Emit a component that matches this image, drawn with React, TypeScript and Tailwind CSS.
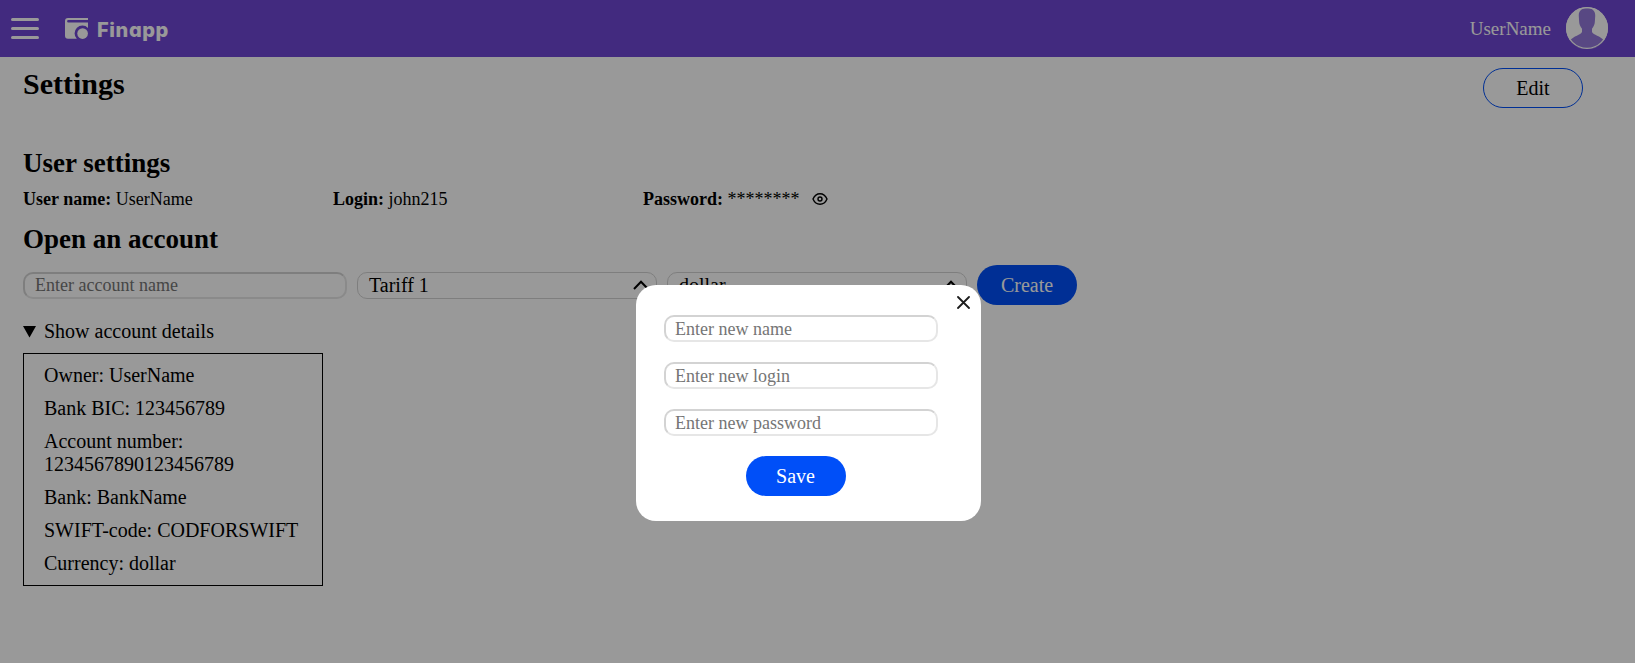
import React from "react";

const details = [
  "Owner: UserName",
  "Bank BIC: 123456789",
  "Account number: 1234567890123456789",
  "Bank: BankName",
  "SWIFT-code: CODFORSWIFT",
  "Currency: dollar",
];

const fieldClass =
  "block h-[27px] rounded-[10px] border-2 border-t-[#d3d3d3] border-l-[#d3d3d3] border-r-[#e6e6e6] border-b-[#e6e6e6] bg-white pt-px pr-[10px] pb-0 text-[18px] leading-[20px] text-black placeholder:text-[#757575] outline-none";

function SelectBox({ value }: { value: string }) {
  return (
    <div className="flex h-[27px] w-[300px] items-center justify-between rounded-[10px] border border-[#d3d3d3] pr-[7px] pl-[11px] text-[20px] leading-[23px]">
      <span>{value}</span>
      <svg width="16" height="10" viewBox="0 0 16 10" fill="none" stroke="#000" strokeWidth="2">
        <path d="M1 9 8 1.8 15 9" />
      </svg>
    </div>
  );
}

function Header() {
  return (
    <header className="flex h-[57px] items-center bg-[#6f47d4] pr-[27px] pl-[11px] text-white">
      <div className="flex w-[28px] flex-col gap-[6px]">
        <span className="h-[3px] rounded-full bg-white" />
        <span className="h-[3px] rounded-full bg-white" />
        <span className="h-[3px] rounded-full bg-white" />
      </div>
      <svg className="ml-[26px]" width="24" height="22" viewBox="0 0 24 22">
        <path
          fill="#fff"
          d="M3 0H23V2H3.400a.7.7 0 0 0 0 2.600H23V9.900A6.800 6.800 0 0 0 11.800 20.800H3A3 3 0 0 1 0 17.800V3A3 3 0 0 1 3 0Z"
        />
        <circle cx="17.6" cy="15.6" r="5.3" fill="#fff" />
      </svg>
      <span className="ml-[8px] pt-[2px] font-['Inter',sans-serif] text-[20px] leading-[26px] font-extrabold tracking-[0.6px] [font-feature-settings:'cv11']">
        Finapp
      </span>
      <span className="ml-auto text-[19px] leading-[22px]">UserName</span>
      <svg className="-mt-px ml-[15px]" width="42" height="42" viewBox="0 0 42 42">
        <circle cx="21" cy="21" r="21" fill="#fff" />
        <path
          fill="#9379da"
          d="M21 1.200c6 0 8.500 3 8.200 8l-.3 4.800c0 3-1.200 5.600-2.900 7.800v3.200c1.200 3 8.500 4 12 8.500A20.500 20.500 0 0 1 4 33.500c3.500-4.500 10.800-5.500 12-8.500v-3.200c-1.700-2.200-2.900-4.800-2.900-7.800l-.3-4.800C12.500 4.200 15 1.200 21 1.200Z"
        />
        <circle cx="21" cy="21" r="20.400" fill="none" stroke="#fff" strokeWidth="1.2" />
      </svg>
    </header>
  );
}

function EditDialog() {
  return (
    <div className="fixed inset-0 flex items-start bg-black/40 pt-[285px] pl-[636px]">
      <div className="relative flex h-[236px] w-[345px] flex-col gap-[20px] rounded-[20px] bg-white pt-[30px] pl-[28px]">
        <input className={`w-[274px] pl-[9px] ${fieldClass}`} placeholder="Enter new name" />
        <input className={`w-[274px] pl-[9px] ${fieldClass}`} placeholder="Enter new login" />
        <input className={`w-[274px] pl-[9px] ${fieldClass}`} placeholder="Enter new password" />
        <button className="ml-[82px] h-[40px] w-[100px] rounded-full bg-[#004ff8] pr-px text-[20px] text-white">
          Save
        </button>
        <button aria-label="Close" className="absolute top-[11px] right-[11px]">
          <svg width="13" height="13" viewBox="0 0 13 13" stroke="#1c1c1c" strokeWidth="1.8" strokeLinecap="round">
            <path d="M1 1 12 12M12 1 1 12" />
          </svg>
        </button>
      </div>
    </div>
  );
}

export default function App() {
  return (
    <div className="h-[663px] overflow-hidden bg-white font-['Liberation_Serif',serif] text-black">
      <Header />
      <main className="pr-[52px] pl-[23px]">
        <div className="flex items-start justify-between pt-[11px]">
          <h1 className="-mt-px text-[30px] leading-[34px] font-bold">Settings</h1>
          <button className="h-[40px] w-[100px] rounded-full border border-[#004ff8] text-[20px]">Edit</button>
        </div>

        <h2 className="mt-[40px] text-[27px] leading-[31px] font-bold">User settings</h2>
        <div className="mt-[10px] flex text-[18px] leading-[21px]">
          <p className="w-[310px]">
            <b>User name:</b> UserName
          </p>
          <p className="w-[310px]">
            <b>Login:</b> john215
          </p>
          <p className="flex items-center">
            <span>
              <b>Password:</b> ********
            </span>
            <svg
              className="-mt-px ml-[12px]"
              width="16"
              height="14"
              viewBox="0 0 16 14"
              fill="none"
              stroke="#000"
              strokeWidth="1.4"
            >
              <path d="M1 7C2.500 3.500 5 1.700 8 1.700S13.500 3.500 15 7C13.500 10.500 11 12.300 8 12.300S2.500 10.500 1 7Z" />
              <circle cx="8" cy="7" r="2" />
            </svg>
          </p>
        </div>

        <h2 className="mt-[14px] text-[27px] leading-[31px] font-bold">Open an account</h2>
        <div className="mt-[10px] flex items-center gap-[10px]">
          <input className={`w-[324px] pl-[10px] ${fieldClass}`} placeholder="Enter account name" />
          <SelectBox value="Tariff 1" />
          <SelectBox value="dollar" />
          <button className="h-[40px] w-[100px] rounded-full bg-[#004ff8] text-[20px] text-white">Create</button>
        </div>

        <div className="mt-[15px] flex items-center text-[20px] leading-[23px]">
          <svg width="13" height="12" viewBox="0 0 13 12">
            <path d="M0 0H13L6.500 11.500Z" />
          </svg>
          <span className="ml-[8px]">Show account details</span>
        </div>
        <div className="mt-[10px] flex w-[300px] flex-col gap-[10px] border border-black px-[20px] py-[10px] text-[20px] leading-[23px]">
          {details.map((line) => (
            <p key={line}>{line}</p>
          ))}
        </div>
      </main>
      <EditDialog />
    </div>
  );
}
